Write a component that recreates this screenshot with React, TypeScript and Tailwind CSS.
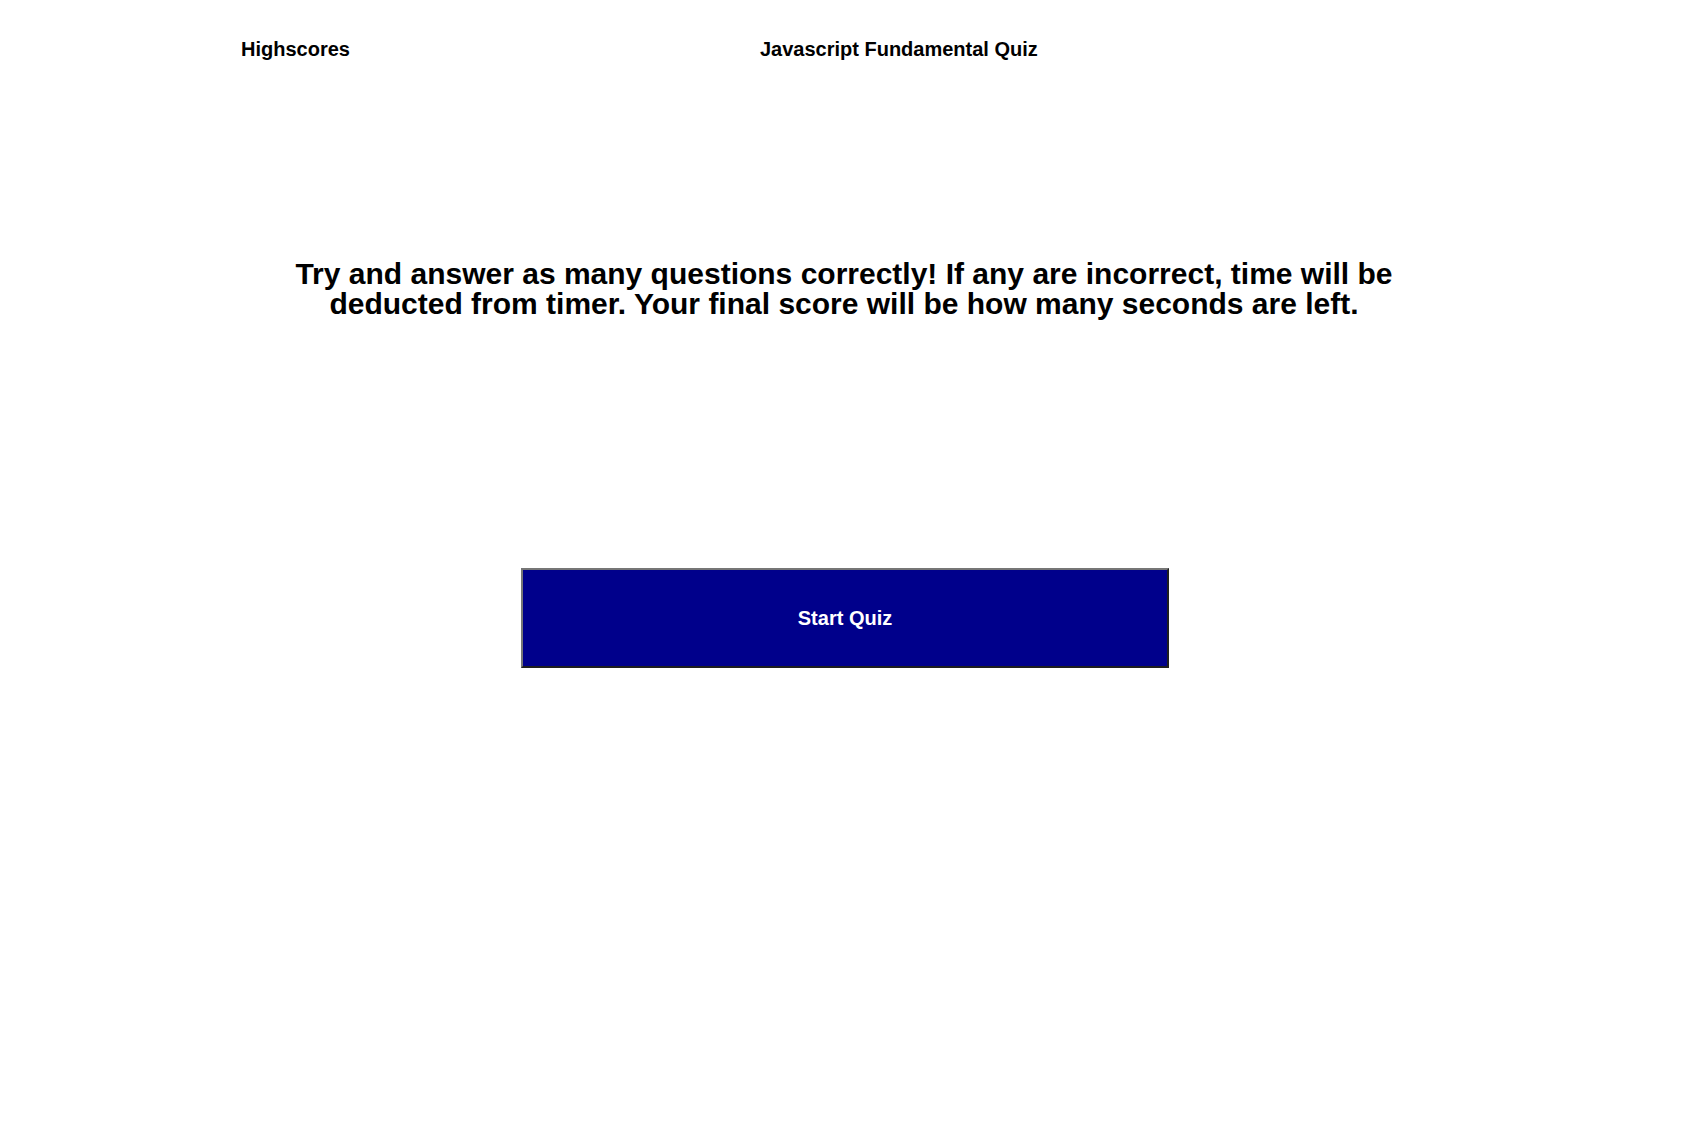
import * as React from "react";

export default function App() {
  return (
    <div className="min-h-[1129px] bg-white text-black font-['Liberation_Sans',Arial,sans-serif]">
      <header className="flex items-center pl-[241px] pt-[37px]">
        <a className="text-[20px] leading-[24px] font-bold cursor-pointer">Highscores</a>
        <h1 className="ml-[410px] text-[20px] leading-[24px] font-bold">Javascript Fundamental Quiz</h1>
      </header>

      <main className="flex flex-col items-center">
        <div className="flex w-full justify-center pl-[5px] pt-[198px]">
          <p className="w-[1200px] text-center text-[30px] leading-[30px] font-bold">
            Try and answer as many questions correctly! If any are incorrect, time will be deducted from timer. Your final
            score will be how many seconds are left.
          </p>
        </div>

        <div className="flex w-full justify-center pl-[7px] pt-[249px]">
          <button
            type="button"
            className="flex h-[100px] w-[648px] items-center justify-center border-2 border-t-[#767676] border-l-[#767676] border-r-[#1e1e1e] border-b-[#1e1e1e] bg-[#00008b] text-[20px] font-bold text-white"
          >
            Start Quiz
          </button>
        </div>
      </main>
    </div>
  );
}
